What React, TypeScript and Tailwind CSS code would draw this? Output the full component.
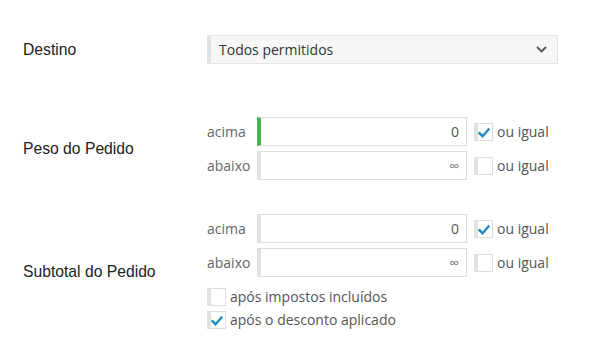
import React from "react";

function Check({ checked }: { checked?: boolean }) {
  return (
    <span className="flex h-[18px] w-[19px] shrink-0 items-center justify-center border border-[#dddddd] border-l-4 border-l-[#e2e2e2] bg-white">
      {checked && (
        <svg width="12" height="10" viewBox="0 0 12 10" className="-ml-[2px] mt-[2px]">
          <path d="M1.5 5.2 L4.6 8.2 L10.5 1.5" fill="none" stroke="#1e8cbe" strokeWidth="2.4" strokeLinecap="square" />
        </svg>
      )}
    </span>
  );
}

function RangeRow({ label, value, checked, green, inf }: { label: string; value: string; checked?: boolean; green?: boolean; inf?: boolean }) {
  return (
    <div className="flex h-[29px] items-center">
      <span className="w-[50px] text-[14px] text-[#666666]">{label}</span>
      <div className={`flex h-[29px] w-[210px] items-center justify-end border border-[#dddddd] border-l-4 ${green ? "border-l-[#46b450]" : "border-l-[#e2e2e2]"} bg-white pr-[7px]`}>
        <span className={inf ? "text-[14px] text-[#777777]" : "text-[14px] text-[#555555]"}>{value}</span>
      </div>
      <div className="ml-[7px] flex items-center gap-[4px]">
        <Check checked={checked} />
        <span className="text-[14px] text-[#555555]">ou igual</span>
      </div>
    </div>
  );
}

const labelFont = { fontFamily: "'Liberation Sans', Arial, sans-serif" };

export default function App() {
  return (
    <div className="h-[353px] w-[600px] bg-white pl-[23px] pt-[35px]" style={{ fontFamily: "'Open Sans', sans-serif" }}>
      <div className="flex items-center">
        <div className="w-[184px] text-[15.7px] text-[#222222]" style={labelFont}>Destino</div>
        <div className="flex h-[29px] w-[351px] items-center justify-between border border-[#e5e5e5] border-l-4 border-l-[#e2e2e2] bg-[#f7f7f7] pl-[8px] pr-[10px]">
          <span className="text-[14px] text-[#333333]">Todos permitidos</span>
          <svg width="11" height="7" viewBox="0 0 11 7">
            <path d="M1 1 L5.5 5.5 L10 1" fill="none" stroke="#555555" strokeWidth="1.8" />
          </svg>
        </div>
      </div>

      <div className="mt-[53px] flex items-center">
        <div className="w-[184px] text-[15.7px] text-[#222222]" style={labelFont}>Peso do Pedido</div>
        <div className="flex flex-col gap-[5px]">
          <RangeRow label="acima" value="0" checked green />
          <RangeRow label="abaixo" value="∞" inf />
        </div>
      </div>

      <div className="mt-[34px] flex items-center">
        <div className="w-[184px] text-[15.7px] text-[#222222]" style={labelFont}>Subtotal do Pedido</div>
        <div className="flex flex-col">
          <div className="flex flex-col gap-[5px]">
            <RangeRow label="acima" value="0" checked />
            <RangeRow label="abaixo" value="∞" inf />
          </div>
          <div className="mt-[9px] flex items-center gap-[4px]">
            <Check />
            <span className="text-[14px] text-[#555555]">após impostos incluídos</span>
          </div>
          <div className="mt-[2px] flex items-center gap-[4px]">
            <Check checked />
            <span className="text-[14px] text-[#555555]">após o desconto aplicado</span>
          </div>
        </div>
      </div>
    </div>
  );
}
